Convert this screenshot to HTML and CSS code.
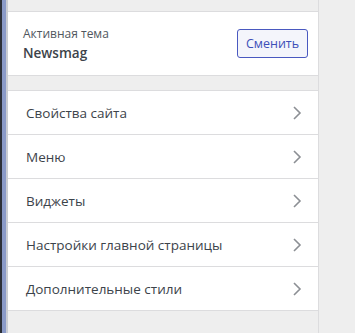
FILE: index.html
```html
<!DOCTYPE html>
<html lang="ru">
<head>
  <meta charset="UTF-8" />
  <title>Настроить</title>
  <link rel="stylesheet" href="styles.css">
</head>
<body>
  <div class="edge"></div>
  <div class="accent"></div>
  <div class="shade"></div>
  <div class="panel">
    <div class="theme">
      <div class="theme-info">
        <span class="theme-label">Активная тема</span>
        <span class="theme-name">Newsmag</span>
      </div>
      <button class="change">Сменить</button>
    </div>
    <ul class="sections">
      <li>Свойства сайта <span class="chev"><svg width="10" height="16" viewBox="0 0 10 16"><path d="M2 2l6 6-6 6" fill="none" stroke="#8c8f94" stroke-width="1.6"/></svg></span></li>
      <li>Меню <span class="chev"><svg width="10" height="16" viewBox="0 0 10 16"><path d="M2 2l6 6-6 6" fill="none" stroke="#8c8f94" stroke-width="1.6"/></svg></span></li>
      <li>Виджеты <span class="chev"><svg width="10" height="16" viewBox="0 0 10 16"><path d="M2 2l6 6-6 6" fill="none" stroke="#8c8f94" stroke-width="1.6"/></svg></span></li>
      <li>Настройки главной страницы <span class="chev"><svg width="10" height="16" viewBox="0 0 10 16"><path d="M2 2l6 6-6 6" fill="none" stroke="#8c8f94" stroke-width="1.6"/></svg></span></li>
      <li>Дополнительные стили <span class="chev"><svg width="10" height="16" viewBox="0 0 10 16"><path d="M2 2l6 6-6 6" fill="none" stroke="#8c8f94" stroke-width="1.6"/></svg></span></li>
    </ul>
  </div>
  <div class="rest"></div>
</body>
</html>
```
FILE: styles.css
```css
html, body {
  height: 100%;
}
body {
  margin: 0;
  display: flex;
  background: #eeeeee;
  font-family: 'Open Sans', 'Noto Sans', sans-serif;
  color: #3c434a;
  overflow: hidden;
}
.edge {
  width: 2px;
  background: #2c3038;
}
.accent {
  width: 4px;
  background: #8a9ac8;
}
.shade {
  width: 2px;
  background: #c9ccd3;
}
.panel {
  width: 310px;
  background: #eeeeee;
  border-right: 1px solid #dcdcde;
  padding-top: 11px;
}
.theme {
  display: flex;
  justify-content: space-between;
  align-items: center;
  background: #fff;
  border-top: 1px solid #dcdcde;
  border-bottom: 1px solid #dcdcde;
  height: 63px;
  padding: 0 10px 0 15px;
}
.theme-info {
  display: flex;
  flex-direction: column;
}
.theme-label {
  font-size: 12px;
  color: #50575e;
  line-height: 18px;
}
.theme-name {
  font-size: 13.5px;
  font-weight: 600;
  color: #3c434a;
  line-height: 20px;
}
.change {
  font-family: inherit;
  font-size: 12.5px;
  color: #3d4fb8;
  background: #f4f5fb;
  border: 1px solid #4a59c0;
  border-radius: 3px;
  height: 29px;
  width: 71px;
  padding: 0;
}
.sections {
  list-style: none;
  margin: 14px 0 0;
  padding: 0;
  background: #fff;
  border-top: 1px solid #dcdcde;
}
.sections li {
  display: flex;
  justify-content: space-between;
  align-items: center;
  height: 43px;
  padding: 0 16px 0 18px;
  border-bottom: 1px solid #dcdcde;
  font-size: 13.5px;
}
.chev {
  display: flex;
}
.rest {
  flex: 1;
}
```
